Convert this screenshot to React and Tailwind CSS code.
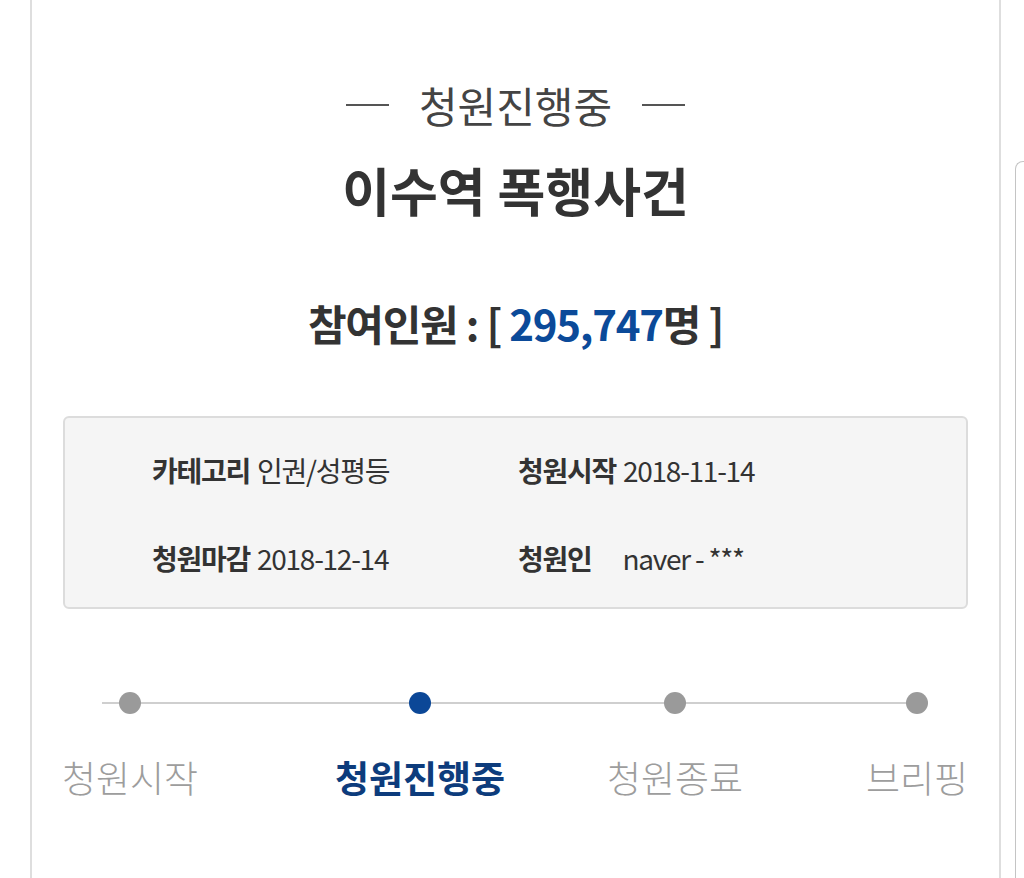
const FONT = { fontFamily: '"Noto Sans CJK KR", "Noto Sans", sans-serif' };

const STEPS = [
  { label: '청원시작', width: 'w-[140px]', gap: '', active: false },
  { label: '청원진행중', width: 'w-[180px]', gap: 'ml-[130px]', active: true },
  { label: '청원종료', width: 'w-[140px]', gap: 'ml-[95px]', active: false },
  { label: '브리핑', width: 'w-[112px]', gap: 'ml-[116px]', active: false },
];

function InfoItem({ label, value, gap = 'ml-[7px]' }) {
  return (
    <div className="flex items-center text-[28px] leading-none tracking-[-0.045em] text-[#333]">
      <span className="font-bold">{label}</span>
      <span className={`${gap} font-normal`}>{value}</span>
    </div>
  );
}

function Timeline() {
  return (
    <div className="relative mt-[83px] ml-[28px] w-[913px]">
      {/* line under the dots */}
      <div className="absolute left-[42px] top-[10px] h-[2px] w-[815px] bg-[#cfcfcf]" />
      <div className="relative flex">
        {STEPS.map((s) => (
          <div key={s.label} className={`flex flex-col items-center ${s.width} ${s.gap}`}>
            <div
              className={`h-[22px] w-[22px] rounded-full ${
                s.active ? 'bg-[#0b4797]' : 'bg-[#9a9a9a]'
              }`}
            />
            <div
              className={`mt-[45px] whitespace-nowrap text-[37px] leading-none ${
                s.active ? 'font-bold text-[#0d3c7c]' : 'font-light text-[#9d9d9d]'
              }`}
            >
              {s.label}
            </div>
          </div>
        ))}
      </div>
    </div>
  );
}

export default function App() {
  return (
    <div className="flex h-[878px] w-[1024px] overflow-hidden bg-white" style={FONT}>
      {/* Main petition card */}
      <div className="ml-[30px] flex w-[971px] shrink-0 flex-col border-x-2 border-[#dedede]">
        <div className="mt-[84px] flex items-center justify-center">
          <span className="h-[2px] w-[43px] bg-[#555]" />
          <span className="mx-[30px] text-[42px] font-normal leading-none text-[#444]">
            청원진행중
          </span>
          <span className="h-[2px] w-[43px] bg-[#555]" />
        </div>

        <h1 className="mt-[38px] text-center text-[52px] font-bold leading-none text-[#333]">
          이수역 폭행사건
        </h1>

        <div className="mt-[86px] text-center text-[42px] font-bold leading-none tracking-[-0.03em] text-[#333]">
          참여인원 : [ <span className="text-[#0b4a99]">295,747</span>명 ]
        </div>

        <div className="mx-[31px] mt-[72px] h-[193px] rounded-md border-2 border-[#dcdcdc] bg-[#f5f5f5] pl-[87px] pt-[38px]">
          <div className="grid grid-cols-[366px_1fr] gap-y-[60px]">
            <InfoItem label="카테고리" value="인권/성평등" />
            <InfoItem label="청원시작" value="2018-11-14" />
            <InfoItem label="청원마감" value="2018-12-14" />
            <InfoItem label="청원인" value="naver - ***" gap="ml-[31px]" />
          </div>
        </div>

        <Timeline />
      </div>

      {/* Edge of the next card */}
      <div className="ml-[14px] mt-[161px] w-[40px] shrink-0 rounded-tl-lg border-l border-t border-[#c4c4c4]" />
    </div>
  );
}
